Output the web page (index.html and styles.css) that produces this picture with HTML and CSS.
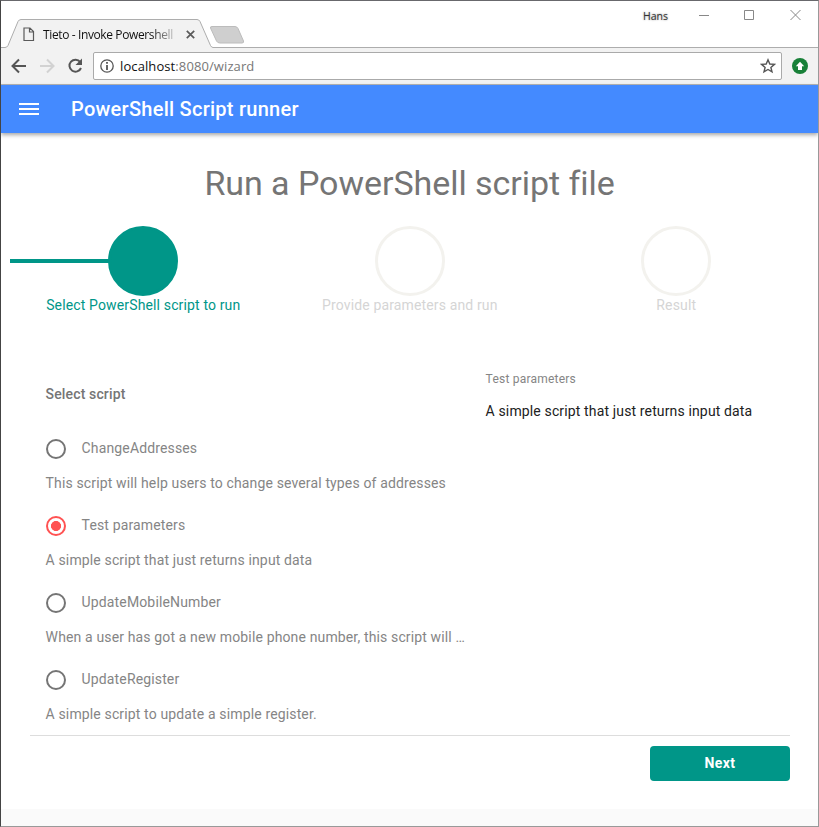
FILE: index.html
```html
<!DOCTYPE html>
<html lang="en">
<head>
<meta charset="utf-8">
<title>Tieto - Invoke Powershell</title>
<link rel="stylesheet" href="styles.css">
</head>
<body>
<div class="window">
  <div class="tabstrip">
    <svg class="tab-shape" width="817" height="47" viewBox="1 1 817 47">
      <path d="M1 47.500H5Q7 47.500 8 45.500L18 21.500Q19 19.500 21 19.500H197Q199 19.500 200 21.500L210.500 45.500Q211.500 47.500 213 47.500H818V49H1Z" fill="#f2f2f2"/>
      <path d="M1 47.500H5Q7 47.500 8 45.500L18 21.500Q19 19.500 21 19.500H197Q199 19.500 200 21.500L210.500 45.500Q211.500 47.500 213 47.500H818" fill="none" stroke="#adadad"/>
      <path d="M212 26.500H235Q237 26.500 238 28.500L243.500 41Q244 43 242 43H220Q217.500 43 216.500 41L210.500 28Q210 26.500 212 26.500Z" fill="#cfcfcf" stroke="#bcbcbc"/>
    </svg>
    <div class="tab">
      <svg width="12" height="15" viewBox="0 0 12 15"><path d="M1 1H7L10.500 4.500V13.500H1ZM6.500 1V5H10.500" fill="none" stroke="#5a5a5a" stroke-width="1.200"/></svg>
      <span class="tab-title">Tieto - Invoke Powershell</span>
      <svg width="9" height="9" viewBox="0 0 9 9"><path d="M.8.8L8.200 8.200M8.200.8L.8 8.200" stroke="#5a5a5a" stroke-width="1.700"/></svg>
    </div>
    <div class="controls">
      <span class="user">Hans</span>
      <svg width="104" height="12" viewBox="0 0 104 12" fill="none" stroke="#888"><path d="M0 6.500H10M45.500 1.500H54.500V10.500H45.500ZM91.500 1L101.500 11M101.500 1L91.500 11"/></svg>
    </div>
  </div>
  <div class="toolbar">
    <svg class="nav" width="74" height="18" viewBox="0 0 74 18" fill="none" stroke-width="2">
      <path d="M15 9H2M8 2.500L1.500 9L8 15.500" stroke="#555"/>
      <path d="M29 9H42M36 2.500L42.500 9L36 15.500" stroke="#d2d2d2"/>
      <path d="M69.200 5A6 6 0 1 0 70 11" stroke="#555"/><path d="M71 1.500V8H64.500Z" fill="#555"/>
    </svg>
    <div class="address">
      <svg width="14" height="14" viewBox="0 0 14 14"><circle cx="7" cy="7" r="6.200" fill="none" stroke="#555" stroke-width="1.300"/><path d="M7 6V11M7 3V4.800" stroke="#555" stroke-width="1.800"/></svg>
      <span class="url">localhost<span class="path">:8080/wizard</span></span>
      <svg width="16" height="16" viewBox="0 0 16 16"><path d="M8 1.800L9.800 6L14.400 6.400L10.900 9.400L12 13.900L8 11.500L4 13.900L5.100 9.400L1.600 6.400L6.200 6Z" fill="none" stroke="#555" stroke-width="1.400"/></svg>
    </div>
    <svg class="ext" width="16" height="16" viewBox="0 0 16 16"><circle cx="8" cy="8" r="8" fill="#188038"/><path d="M8 3.800L12.200 8.200H10V12H6V8.200H3.800Z" fill="#fff"/></svg>
  </div>
  <header class="appbar">
    <svg width="20" height="14" viewBox="0 0 20 14"><path d="M0 2H20M0 7H20M0 12H20" stroke="#fff" stroke-width="2"/></svg>
    <span class="brand">PowerShell Script runner</span>
  </header>
  <main class="page">
    <h1>Run a PowerShell script file</h1>
    <div class="steps">
      <div class="step active"><div class="track"><i class="circle"></i></div><span>Select PowerShell script to run</span></div>
      <div class="step"><div class="track"><i class="circle"></i></div><span>Provide parameters and run</span></div>
      <div class="step"><div class="track"><i class="circle"></i></div><span>Result</span></div>
    </div>
    <div class="content">
      <section class="scripts">
        <h2>Select script</h2>
        <div class="option"><div class="choice"><i class="radio"></i><span>ChangeAddresses</span></div><p>This script will help users to change several types of addresses</p></div>
        <div class="option"><div class="choice"><i class="radio on"></i><span>Test parameters</span></div><p>A simple script that just returns input data</p></div>
        <div class="option"><div class="choice"><i class="radio"></i><span>UpdateMobileNumber</span></div><p>When a user has got a new mobile phone number, this script will …</p></div>
        <div class="option"><div class="choice"><i class="radio"></i><span>UpdateRegister</span></div><p>A simple script to update a simple register.</p></div>
      </section>
      <aside class="detail"><h3>Test parameters</h3><p>A simple script that just returns input data</p></aside>
    </div>
    <div class="footer"><button class="next">Next</button></div>
  </main>
</div>
</body>
</html>
```
FILE: styles.css
```css
* { box-sizing: border-box; }
body { margin: 0; font-family: Roboto, "Liberation Sans", sans-serif; }
h1, h2, h3, p { margin: 0; }
svg { display: block; flex: none; }
.window { width: 819px; height: 827px; border: 1px solid #999; border-top-color: #68686c; border-left-color: #444; background: #fafafa; overflow: hidden; }
.tabstrip { position: relative; height: 47px; background: #fff; display: flex; justify-content: space-between; }
.tab-shape { position: absolute; left: 0; top: 0; }
.tab { position: relative; display: flex; align-items: center; margin: 19px 0 0 22px; width: 172px; height: 28px; }
.tab-title { width: 135px; margin: 0 8px 0 8px; white-space: nowrap; font: 12px "Open Sans", sans-serif; letter-spacing: -.38px; color: #111; mask-image: linear-gradient(90deg, #000 108px, transparent 137px); }
.controls { position: relative; display: flex; gap: 31px; padding: 8px 15px 0 0; }
.user { font: 10.500px/14px "Open Sans", sans-serif; color: #333; text-shadow: 0 0 2px #888; }
.toolbar { display: flex; align-items: center; height: 37px; padding: 0 10px 1px; background: #f2f2f2; border-bottom: 1px solid #b5b5b5; }
.address { display: flex; align-items: center; width: 689px; height: 28px; margin: 0 10px 0 8px; padding: 0 5px 0 6px; border: 1px solid #aaa; border-radius: 2px; background: #fff; }
.url { flex: 1; margin-left: 6px; font: 13px "Open Sans", sans-serif; letter-spacing: .1px; color: #111; }
.path { color: #777; }
.appbar { position: relative; display: flex; align-items: center; height: 48px; padding-left: 18px; background: #448aff; box-shadow: 0 2px 4px rgba(0,0,0,.35); color: #fff; }
.brand { margin-left: 32px; font-size: 20px; font-weight: 500; letter-spacing: .26px; }
.page { height: 676px; padding-top: 26px; background: #fff; }
h1 { font-size: 34px; font-weight: 400; line-height: 48px; text-align: center; color: #757575; letter-spacing: -.05px; }
.steps { display: grid; grid-template-columns: repeat(3, 266.500px); margin: 19px 0 0 9px; }
.step { text-align: center; color: #d5d5d5; font-size: 14px; line-height: 18px; letter-spacing: .14px; }
.track { display: flex; justify-content: center; align-items: center; height: 70px; }
.circle { width: 70px; height: 70px; border: 3px solid #f3f2ee; border-radius: 50%; }
.active { color: #009688; }
.active .track { background: linear-gradient(#009688, #009688) 0 33px / 50% 4px no-repeat; }
.active .circle { background: #009688; border-color: #009688; }
.content { display: grid; grid-template-columns: 440px 1fr; margin: 56px 0 0 44.600px; }
.scripts { font-size: 14px; color: #858585; letter-spacing: .14px; }
h2 { margin-top: 14px; font-size: 14px; font-weight: 500; line-height: 20px; color: #757575; }
.option { height: 77px; }
.option:first-of-type { margin-top: 24px; }
.choice { display: flex; align-items: center; height: 42px; }
.choice span { margin: -2px 0 0 16px; }
.radio { width: 20px; height: 20px; border: 2px solid #757575; border-radius: 50%; }
.on { border-color: #ff5252; background: radial-gradient(circle, #ff5252 4.700px, transparent 5.300px); }
.option p { line-height: 20px; margin-top: 3px; white-space: nowrap; }
.detail { font-size: 14px; line-height: 20px; letter-spacing: .14px; color: #212121; }
h3 { font-size: 12px; font-weight: 400; line-height: 18px; margin-bottom: 13px; color: #858585; letter-spacing: .22px; }
.footer { display: flex; justify-content: flex-end; margin: -1px 28px 0 29px; padding-top: 10px; border-top: 1px solid #ddd; }
.next { width: 140px; height: 35px; border: 0; border-radius: 4px; background: #009688; color: #fff; font: bold 14px Roboto, sans-serif; letter-spacing: .4px; padding-bottom: 2px; }
```
